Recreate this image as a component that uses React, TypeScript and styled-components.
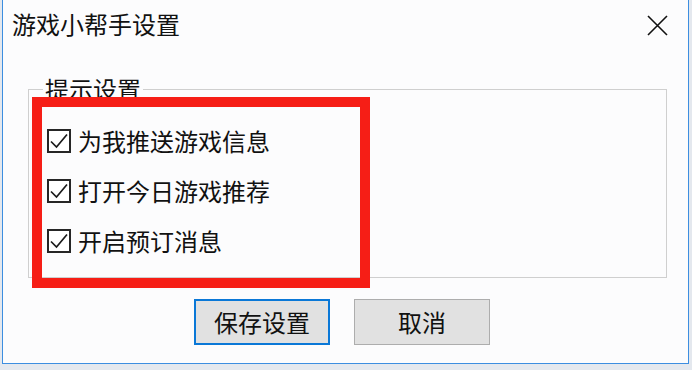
import React from 'react'
import styled, { createGlobalStyle } from 'styled-components'

const GlobalStyle = createGlobalStyle`
  html, body {
    margin: 0;
    padding: 0;
    background: #e4e8ee;
    font-family: "Noto Sans CJK SC", "Noto Sans", sans-serif;
  }
`

const Window = styled.div`
  position: relative;
  box-sizing: border-box;
  width: 687px;
  height: 364px;
  margin-left: 2px;
  background: #fcfcfd;
  border: 1px solid #3d8ee0;
  border-top: none;
  display: flex;
  flex-direction: column;
`

const TitleBar = styled.div`
  height: 48px;
  display: flex;
  align-items: center;
  justify-content: space-between;
  padding: 0 20px 0 9px;
`

const Title = styled.div`
  font-size: 24px;
  line-height: 24px;
  color: #111;
`

const CloseButton = styled.div`
  width: 22px;
  height: 22px;
  display: flex;
  align-items: center;
  justify-content: center;
  margin-top: 2px;
`

const Group = styled.fieldset`
  margin: 29px 21px 0 25px;
  padding: 15px 18px 11px 18px;
  border: 1px solid #cfcfcf;
  min-width: 0;
`

const GroupLabel = styled.legend`
  margin-left: -4px;
  padding: 0 2px;
  font-size: 24px;
  line-height: 24px;
  color: #111;
`

const Option = styled.label`
  height: 50px;
  display: flex;
  align-items: center;
  gap: 7px;
  font-size: 24px;
  line-height: 24px;
  color: #111;
`

const Box = styled.span`
  box-sizing: border-box;
  width: 24px;
  height: 24px;
  border: 2px solid #262626;
  background: #fff;
  display: flex;
  align-items: center;
  justify-content: center;
`

const ButtonRow = styled.div`
  display: flex;
  gap: 24px;
  margin-top: 21px;
  padding-left: 191px;
`

const Button = styled.button<{ $primary?: boolean }>`
  box-sizing: border-box;
  width: 136px;
  height: 46px;
  background: #e1e1e1;
  border: ${(p) => (p.$primary ? '2px solid #0a78d7' : '1px solid #adadad')};
  font-family: inherit;
  font-size: 24px;
  line-height: 24px;
  color: #111;
  padding: 0;
`

const Highlight = styled.div`
  position: absolute;
  left: 29px;
  top: 97px;
  width: 338px;
  height: 191px;
  box-sizing: border-box;
  border: 10px solid #f61e16;
  pointer-events: none;
`

const options = ['为我推送游戏信息', '打开今日游戏推荐', '开启预订消息']

const Check = () => (
  <svg width="18" height="16" viewBox="0 0 18 16">
    <path d="M1 8.5 L6.5 14 L17 1.5" fill="none" stroke="#1a1a1a" strokeWidth="1.7" />
  </svg>
)

const App: React.FC = () => {
  return (
    <>
      <GlobalStyle />
      <Window>
        <TitleBar>
          <Title>游戏小帮手设置</Title>
          <CloseButton>
            <svg width="21" height="21" viewBox="0 0 21 21">
              <path d="M1 1 L20 20 M20 1 L1 20" stroke="#111" strokeWidth="1.6" />
            </svg>
          </CloseButton>
        </TitleBar>
        <Group>
          <GroupLabel>提示设置</GroupLabel>
          {options.map((o) => (
            <Option key={o}>
              <Box>
                <Check />
              </Box>
              {o}
            </Option>
          ))}
        </Group>
        <ButtonRow>
          <Button $primary>保存设置</Button>
          <Button>取消</Button>
        </ButtonRow>
        <Highlight />
      </Window>
    </>
  )
}

export default App
